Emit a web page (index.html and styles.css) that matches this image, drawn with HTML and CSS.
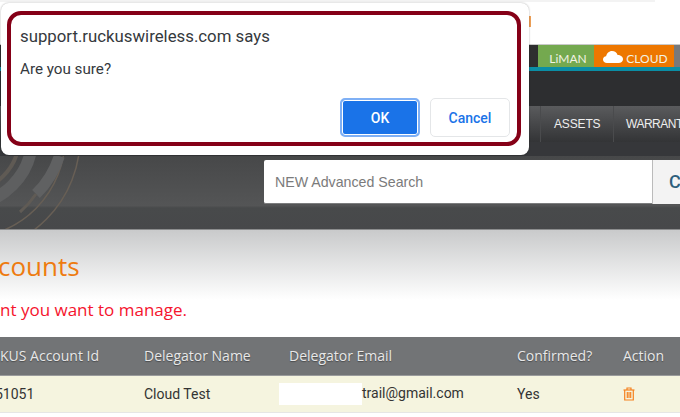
FILE: index.html
```html
<!DOCTYPE html>
<html lang="en">
<head>
<meta charset="utf-8">
<title>Delegated Accounts</title>
<link rel="stylesheet" href="styles.css">
</head>
<body>
<header class="top">
  <div class="brand">
    <div class="brand-rule"></div>
    <div class="brand-mark"></div>
  </div>
  <div class="tabs">
    <span class="tab tab-liman">LiMAN</span>
    <span class="tab tab-cloud">
      <svg class="cloud" viewBox="0 0 20 12" width="20" height="12"><path d="M4 12C1.700 12 0 10.500 0 8.500C0 6.700 1.300 5.400 3.100 5.200C3.700 2.300 6 0 9 0C11.700 0 13.800 1.600 14.600 4C17.600 4 20 5.700 20 8.200C20 10.500 18 12 15.500 12Z" fill="#fff"/></svg>
      CLOUD
    </span>
    <span class="tab tab-rest"></span>
  </div>
</header>
<div class="masthead"></div>
<nav class="nav">
  <span class="nav-item nav-assets">ASSETS</span>
  <span class="nav-item nav-warranty">WARRANT</span>
</nav>
<div class="nav-foot"></div>
<section class="search-band">
  <svg class="rings" viewBox="0 0 90 74" width="90" height="74">
    <g fill="none">
      <circle cx="-35" cy="-18" r="115" stroke="#685f55" stroke-width="1.500"/>
      <circle cx="-35" cy="-18" r="100" stroke="#685f55" stroke-width="1.500"/>
      <path d="M59.300 0A91 91 0 0 1 36 38" stroke="#606162" stroke-width="11"/>
      <path d="M36 38A91 91 0 0 1 20 56" stroke="#605b55" stroke-width="3"/>
      <circle cx="-35" cy="-18" r="67" stroke="#5e5f60" stroke-width="12"/>
      <circle cx="-35" cy="-18" r="54" stroke="#5f5a54" stroke-width="4"/>
    </g>
  </svg>
  <div class="search">
    <div class="search-input">NEW Advanced Search</div>
    <div class="search-btn">C</div>
  </div>
</section>
<main class="content">
  <div class="page-head">
    <h1 class="title">counts</h1>
    <p class="notice">nt you want to manage.</p>
  </div>
  <table class="grid">
    <thead>
      <tr>
        <th class="col-id">KUS Account Id</th>
        <th class="col-name">Delegator Name</th>
        <th class="col-email">Delegator Email</th>
        <th class="col-conf">Confirmed?</th>
        <th class="col-act">Action</th>
      </tr>
    </thead>
    <tbody>
      <tr>
        <td class="cell-id">51051</td>
        <td>Cloud Test</td>
        <td><span class="redact"></span>trail@gmail.com</td>
        <td>Yes</td>
        <td>
          <svg class="trash" viewBox="0 0 12 14" width="12" height="14" fill="none" stroke="#f58220" stroke-width="1.200"><path d="M0.500 3H11.500"/><path d="M4 3V1H8V3"/><path d="M1.700 3V13H10.300V3"/><path d="M4.300 5V11M6 5V11M7.700 5V11"/></svg>
        </td>
      </tr>
    </tbody>
  </table>
</main>
<div class="dialog" role="alertdialog">
  <div class="dialog-mark">
    <div class="dialog-title">support.ruckuswireless.com says</div>
    <div class="dialog-msg">Are you sure?</div>
    <div class="dialog-actions">
      <button class="btn btn-ok">OK</button>
      <button class="btn btn-cancel">Cancel</button>
    </div>
  </div>
</div>
</body>
</html>
```
FILE: styles.css
```css
* { box-sizing: border-box; }
html, body { margin: 0; padding: 0; }
body {
  width: 680px;
  height: 417px;
  overflow: hidden;
  position: relative;
  background: #fff;
  font-family: "Roboto", "Liberation Sans", sans-serif;
}
.top {
  height: 71px;
  display: flex;
  flex-direction: column;
  background: #fff;
}
.brand { height: 45px; border-bottom: 1px solid #c9c9c9; }
.brand-rule { width: 655px; height: 2px; background: #f3f3f3; }
.brand-mark { width: 2px; height: 11px; margin: 14px 0 0 529px; background: #eea057; }
.tabs {
  height: 26px;
  display: flex;
  justify-content: flex-end;
  background: #2e2e2f;
  border-bottom: 4px solid #0b8ea5;
}
.tab {
  height: 22px;
  display: flex;
  align-items: center;
  justify-content: center;
  gap: 3px;
  color: #f2f2e4;
  font-family: "Lato", sans-serif;
  font-size: 12px;
  padding-top: 5px;
}
.tab-liman { width: 56px; background: #74a94f; padding-left: 4px; }
.tab-cloud { width: 80px; background: #ed7700; padding-left: 3px; }
.tab-cloud .cloud { margin-top: -3px; }
.tab-rest { width: 6px; background: #77797b; }
.masthead { height: 35px; background: #2d2e30; }
.nav {
  height: 36px;
  display: flex;
  padding-left: 540px;
  overflow: hidden;
  background: linear-gradient(#5a5b5d, #333436);
  color: #eee;
  font-family: "Liberation Sans", sans-serif;
  font-size: 12px;
}
.nav-item {
  display: flex;
  align-items: center;
  padding-left: 13px;
  border-left: 1px solid #4a4b4d;
  white-space: nowrap;
  flex: none;
}
.nav-assets { width: 73px; letter-spacing: -.15px; }
.nav-warranty { width: 67px; padding-left: 12px; letter-spacing: -.5px; overflow: hidden; }
.nav-foot { height: 14px; background: #36373a; }
.search-band {
  position: relative;
  height: 74px;
  padding: 4px 0 0 264px;
  overflow: hidden;
  background: linear-gradient(#474849 0, #545556 68%, #484a4b 71%, #47484a 100%);
  border-bottom: 1px solid #8b8c8d;
}
.rings { position: absolute; left: 0; top: 0; }
.search { position: relative; display: flex; }
.search-input {
  flex: none;
  width: 388px;
  height: 44px;
  background: #fff;
  border-bottom: 1px solid #7c7d7e;
  border-radius: 2px 0 0 2px;
  padding: 0 11px;
  line-height: 44px;
  color: #7b7b7b;
  font-family: "Liberation Sans", sans-serif;
  font-size: 14.200px;
}
.search-btn {
  flex: none;
  width: 28px;
  height: 44px;
  background: #f3f3f3;
  border-left: 1px solid #bbb;
  padding-left: 16px;
  line-height: 44px;
  color: #2d5f7c;
  font-size: 18px;
  font-weight: 500;
}
.content { background: #fff; }
.page-head {
  height: 107px;
  background: linear-gradient(#c9cacb 0, #fff 70px);
  overflow: hidden;
}
.title {
  margin: 0 0 0 -2px;
  padding-top: 18px;
  height: 68px;
  color: #ee7b10;
  font-family: "Open Sans", sans-serif;
  font-weight: 400;
  font-size: 26px;
  line-height: 36px;
}
.notice {
  margin: 0;
  height: 24px;
  color: #f5142d;
  font-family: "Open Sans", sans-serif;
  font-size: 17px;
  line-height: 24px;
}
.grid {
  width: 680px;
  border-collapse: collapse;
  table-layout: fixed;
}
.grid th {
  height: 38px;
  background: #727476;
  color: #e8e8e8;
  border-bottom: 1px solid #9a9b9c;
  font-family: "Open Sans", sans-serif;
  font-weight: 400;
  font-size: 14px;
  text-align: left;
  padding: 0;
  white-space: nowrap;
  text-shadow: 0 1px 1px rgba(0,0,0,.35);
}
.grid td {
  height: 37px;
  background: #f5f4df;
  border-bottom: 1px solid #e6e6e4;
  color: #333;
  font-size: 14px;
  padding: 0;
  white-space: nowrap;
}
.grid .cell-id { text-indent: -5px; }
.col-id { width: 144px; }
.col-name { width: 145px; }
.col-email { width: 228px; }
.col-conf { width: 106px; }
.redact {
  display: inline-block;
  vertical-align: middle;
  width: 83px;
  height: 22px;
  margin-left: -10px;
  background: #fff;
}
.trash { display: block; }
.dialog {
  position: absolute;
  left: 1px;
  top: 3px;
  width: 528px;
  height: 152px;
  padding: 8px 8px 8px 6px;
  background: #fff;
  border-radius: 8px;
  box-shadow: 0 0 2px rgba(0,0,0,.35);
}
.dialog-mark {
  height: 135px;
  border: 4px solid #850017;
  border-radius: 14px;
  padding: 10px 7px 0 9px;
  color: #35393d;
  font-family: "Roboto", sans-serif;
}
.dialog-title { font-size: 16.800px; line-height: 22px; }
.dialog-msg { font-size: 15.200px; line-height: 20px; margin-top: 12px; }
.dialog-actions {
  display: flex;
  justify-content: flex-end;
  gap: 10px;
  margin-top: 19px;
}
.btn {
  width: 80px;
  height: 39px;
  font-family: "Roboto", sans-serif;
  font-size: 14px;
  font-weight: 500;
  border-radius: 5px;
  padding: 0;
}
.btn-ok {
  background: #1a73e8;
  color: #fff;
  border: 2px solid #7fb0f5;
  box-shadow: inset 0 0 0 1px #fff;
}
.btn-cancel {
  background: #fff;
  color: #1a73e8;
  border: 1px solid #e4e6e8;
}
```
